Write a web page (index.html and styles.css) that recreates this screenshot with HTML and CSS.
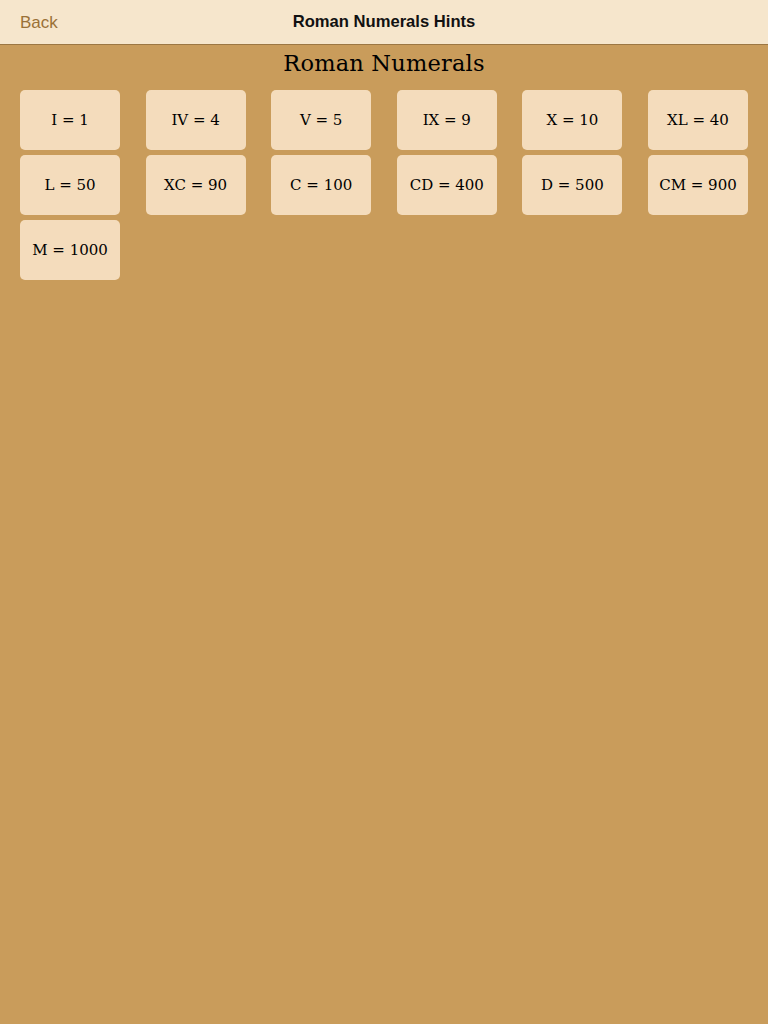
FILE: index.html
```html
<!DOCTYPE html>
<html>
<head>
<meta charset="utf-8">
<title>Roman Numerals Hints</title>
<link rel="stylesheet" href="styles.css">
</head>
<body>
<header class="navbar">
  <a class="back">Back</a>
  <div class="nav-title">Roman Numerals Hints</div>
</header>
<main class="content">
  <h1 class="title">Roman Numerals</h1>
  <div class="grid">
    <div class="tile">I = 1</div>
    <div class="tile">IV = 4</div>
    <div class="tile">V = 5</div>
    <div class="tile">IX = 9</div>
    <div class="tile">X = 10</div>
    <div class="tile">XL = 40</div>
    <div class="tile">L = 50</div>
    <div class="tile">XC = 90</div>
    <div class="tile">C = 100</div>
    <div class="tile">CD = 400</div>
    <div class="tile">D = 500</div>
    <div class="tile">CM = 900</div>
    <div class="tile">M = 1000</div>
  </div>
</main>
</body>
</html>
```
FILE: styles.css
```css
html, body {
  margin: 0;
  padding: 0;
}
body {
  width: 768px;
  height: 1024px;
  background: #c99c5b;
  font-family: "DejaVu Serif", "Liberation Serif", serif;
  overflow: hidden;
}
.navbar {
  height: 44px;
  background: #f6e6cc;
  border-bottom: 1px solid #9c7743;
  display: grid;
  grid-template-columns: 1fr auto 1fr;
  align-items: center;
  padding: 0 20px;
  box-sizing: content-box;
}
.back {
  font-family: "Liberation Sans", Arial, sans-serif;
  font-size: 17px;
  color: #9a7137;
  padding-top: 1px;
}
.nav-title {
  font-family: "Liberation Sans", Arial, sans-serif;
  font-weight: bold;
  font-size: 16.6px;
  color: #111;
}
.content {
  padding: 0 20px;
}
.title {
  margin: 0;
  padding-top: 4px;
  height: 41px;
  text-align: center;
  font-weight: normal;
  font-size: 22.5px;
  line-height: 28px;
  color: #000;
  letter-spacing: 0.2px;
}
.grid {
  display: grid;
  grid-template-columns: repeat(6, 100px);
  justify-content: space-between;
  row-gap: 5px;
}
.tile {
  height: 60px;
  background: #f4dcbc;
  border-radius: 5px;
  display: flex;
  align-items: center;
  justify-content: center;
  font-size: 15px;
  color: #000;
  padding-bottom: 1px;
  box-sizing: border-box;
}
```
